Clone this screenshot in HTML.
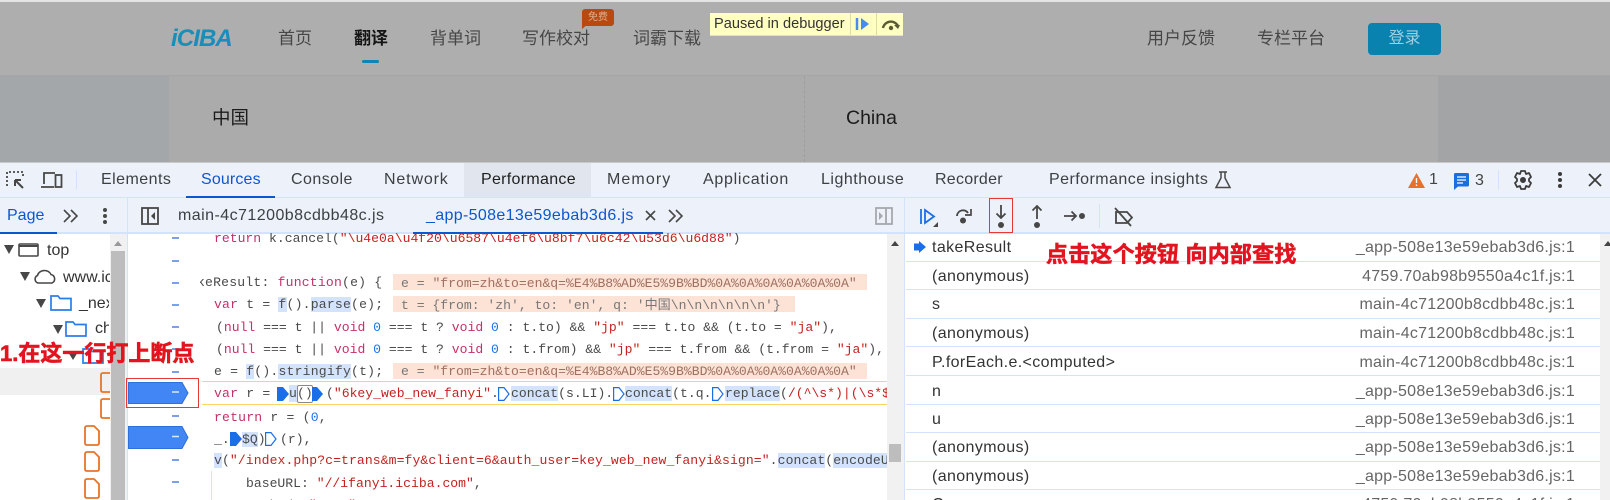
<!DOCTYPE html>
<html><head><meta charset="utf-8"><style>
html,body{margin:0;padding:0;width:1610px;height:500px;overflow:hidden;background:#fff}
body{position:relative;font-family:"Liberation Sans","Noto Sans CJK SC",sans-serif}
.a{position:absolute;white-space:pre}
.nav{top:27px;line-height:24px;font-size:17px;color:#464646}
.tab{top:168px;line-height:24px;font-size:16px;letter-spacing:.45px;color:#3c4043}
.c{position:absolute;left:0;top:0;width:887px;height:500px;clip-path:inset(233px 0 0 200px);font-family:"Liberation Mono",monospace;font-size:13.1px;color:#4a4a4a}
.l{position:absolute;white-space:pre;height:22px;line-height:22px}
.k{color:#c5306a}.s{color:#c5221f}.n{color:#1a73e8}.g{color:#777}
.h{background:#d3e3fd}
.o{position:absolute;background:#fde2d6}
.gm{position:absolute;left:172px;width:7px;height:1.5px;background:#7b9fe8}
.row{position:absolute;left:906px;width:694px;height:28px;border-bottom:1.5px solid #d3e3fd}
.nm{position:absolute;left:932px;font-size:16px;letter-spacing:.38px;color:#333;line-height:22px;white-space:pre}
.sr{position:absolute;right:35px;font-size:16px;color:#666;line-height:22px;white-space:pre;letter-spacing:.25px}
.tree{position:absolute;font-size:16px;color:#333;line-height:22px;white-space:pre}
.red{position:absolute;color:#e2141f;font-weight:700;white-space:pre;-webkit-text-stroke:.6px #e2141f}
svg{position:absolute;overflow:visible}
</style></head><body>

<!-- page behind -->
<div class="a" style="left:0;top:0;width:1610px;height:162px;background:#ababab"></div>
<div class="a" style="left:0;top:0;width:1610px;height:2px;background:#e4e4e4"></div>
<div class="a" style="left:0;top:2px;width:1610px;height:73px;background:#aeaeae;border-bottom:1px solid #a6a6a6"></div>
<div class="a" style="left:0;top:76px;width:169px;height:86px;background:#a4a7aa"></div>
<div class="a" style="left:1438px;top:76px;width:172px;height:86px;background:#a3a4a6"></div>
<div class="a" style="left:804px;top:76px;height:86px;border-left:1px dashed #9e9e9e"></div>

<div class="a" style="left:171px;top:24px;font-size:24px;line-height:30px;font-weight:700;font-style:italic;color:#1a8db8;letter-spacing:-.9px">iCIBA</div>
<div class="a nav" style="left:278px">首页</div>
<div class="a nav" style="left:354px;color:#151515;font-weight:700">翻译</div>
<div class="a" style="left:362px;top:60px;width:17px;height:3px;border-radius:2px;background:#0d86b3"></div>
<div class="a nav" style="left:430px">背单词</div>
<div class="a nav" style="left:522px">写作校对</div>
<div class="a nav" style="left:633px">词霸下载</div>
<div class="a" style="left:582px;top:9px;width:32px;height:17px;border-radius:3px;background:#b8490f;color:#e0b090;font-size:10px;line-height:17px;text-align:center">免费</div>
<svg style="left:582px;top:24px" width="6" height="5"><path d="M0 0H6L0 5Z" fill="#b8490f"/></svg>
<div class="a nav" style="left:1147px">用户反馈</div>
<div class="a nav" style="left:1257px">专栏平台</div>
<div class="a" style="left:1368px;top:23px;width:73px;height:32px;border-radius:4px;background:#0a82b0;color:#9fd0e2;font-size:16px;line-height:32px;text-align:center">登录</div>
<div class="a" style="left:212px;top:104px;font-size:18.5px;line-height:28px;color:#1c1c1c">中国</div>
<div class="a" style="left:846px;top:104px;font-size:19.5px;line-height:28px;color:#1c1c1c">China</div>

<!-- paused box -->
<div class="a" style="left:710px;top:13px;width:193px;height:22px;background:#ffffc2;border-bottom:1px solid #e4e4b0"></div>
<div class="a" style="left:714px;top:13px;font-size:14.6px;line-height:22px;color:#333">Paused in debugger</div>
<div class="a" style="left:850px;top:13px;width:1px;height:22px;background:#dcdca8"></div>
<div class="a" style="left:876px;top:13px;width:1px;height:22px;background:#dcdca8"></div>
<svg style="left:856px;top:17px" width="14" height="14"><path d="M1 1V13" stroke="#4a8af0" stroke-width="2.5"/><path d="M5 1L13 7L5 13Z" fill="#4a8af0"/></svg>
<svg style="left:881px;top:17px" width="20" height="14"><path d="M2 11A8 8 0 0 1 17 9" fill="none" stroke="#5b5b33" stroke-width="2.4"/><path d="M13 8H19L17 12Z" fill="#5b5b33"/><circle cx="10" cy="11" r="2.2" fill="#5b5b33"/></svg>

<!-- devtools -->
<div class="a" style="left:0;top:162px;width:1610px;height:71px;background:#edf2fa;border-top:1px solid #c9c9c9;box-sizing:border-box"></div>
<div class="a" style="left:0;top:197px;width:1610px;height:1px;background:#d3e3fd"></div>
<div class="a" style="left:0;top:232px;width:1610px;height:1.5px;background:#d3e3fd"></div>

<svg style="left:6px;top:170px" width="20" height="20" fill="none" stroke="#474747"><path d="M1 16V2H17V8" stroke-dasharray="2 2" stroke-width="1.8"/><path d="M9 10L17 18M9 10V16M9 10H15" stroke-width="2"/></svg>
<svg style="left:41px;top:171px" width="22" height="18" fill="none" stroke="#474747" stroke-width="1.8"><path d="M3 13V2H14M0 16H13"/><rect x="14.5" y="4" width="6" height="12"/></svg>
<div class="a" style="left:76px;top:170px;width:1px;height:20px;background:#d3e3fd"></div>
<div class="a" style="left:464px;top:163px;width:127px;height:34px;background:#e1e6ee"></div>
<div class="a tab" style="left:101px">Elements</div>
<div class="a tab" style="left:201px;color:#0b57d0;letter-spacing:.15px">Sources</div>
<div class="a" style="left:186px;top:196px;width:89px;height:2px;background:#0b57d0"></div>
<div class="a tab" style="left:291px">Console</div>
<div class="a tab" style="left:384px;letter-spacing:.85px">Network</div>
<div class="a tab" style="left:481px;color:#1f1f1f;letter-spacing:.3px">Performance</div>
<div class="a tab" style="left:607px;letter-spacing:1.1px">Memory</div>
<div class="a tab" style="left:703px;letter-spacing:.7px">Application</div>
<div class="a tab" style="left:821px;letter-spacing:.5px">Lighthouse</div>
<div class="a tab" style="left:935px;letter-spacing:.25px">Recorder</div>
<div class="a tab" style="left:1049px">Performance insights</div>
<svg style="left:1215px;top:171px" width="16" height="18" fill="none" stroke="#474747" stroke-width="1.5"><path d="M4 1H12M6 1V7L1 16.500H15L10 7V1"/></svg>

<svg style="left:1408px;top:173px" width="17" height="15"><path d="M8.500 0L17 15H0Z" fill="#e8702a"/><path d="M8.500 5V10M8.500 11.500V13" stroke="#fff" stroke-width="1.4"/></svg>
<div class="a" style="left:1429px;top:168px;font-size:16px;line-height:24px;color:#444">1</div>
<svg style="left:1454px;top:173px" width="15" height="17"><path d="M0 1.500Q0 0 1.500 0H13.500Q15 0 15 1.500V12Q15 13.500 13.500 13.500H4L0 17Z" fill="#1a6fe0"/><path d="M3 4H12M3 7H12M3 10H9" stroke="#fff" stroke-width="1.300"/></svg>
<div class="a" style="left:1475px;top:169px;font-size:16px;line-height:24px;color:#444">3</div>
<div class="a" style="left:1498px;top:170px;width:1px;height:20px;background:#d3e3fd"></div>
<svg style="left:1513px;top:170px" width="20" height="20" fill="none" stroke="#3c3c3c"><path d="M8 1H12L13 4L16 3L18 7L16 9V11L18 13L16 17L13 16L12 19H8L7 16L4 17L2 13L4 11V9L2 7L4 3L7 4Z" stroke-width="1.800" stroke-linejoin="round"/><circle cx="10" cy="10" r="3" fill="#3c3c3c" stroke="none"/></svg>
<svg style="left:1556px;top:171px" width="8" height="18" fill="#3c3c3c"><circle cx="4" cy="3" r="2"/><circle cx="4" cy="9" r="2"/><circle cx="4" cy="15" r="2"/></svg>
<svg style="left:1588px;top:173px" width="14" height="14" stroke="#3c3c3c" stroke-width="1.800"><path d="M1 1L13 13M13 1L1 13"/></svg>

<!-- 2nd toolbar -->
<div class="a" style="left:7px;top:204px;font-size:16px;line-height:24px;color:#0b57d0">Page</div>
<div class="a" style="left:0;top:232px;width:57px;height:2px;background:#0b57d0"></div>
<svg style="left:63px;top:209px" width="16" height="14" fill="none" stroke="#474747" stroke-width="1.600"><path d="M1 1L7 7L1 13M8 1L14 7L8 13"/></svg>
<svg style="left:101px;top:207px" width="8" height="18" fill="#474747"><circle cx="4" cy="3" r="2"/><circle cx="4" cy="9" r="2"/><circle cx="4" cy="15" r="2"/></svg>
<div class="a" style="left:127px;top:198px;width:1px;height:302px;background:#d3e3fd"></div>
<svg style="left:141px;top:207px" width="18" height="18" fill="none" stroke="#474747" stroke-width="1.800"><rect x="1" y="1" width="16" height="16"/><path d="M7 1V17"/><path d="M14 5V13L10 9Z" fill="#474747" stroke="none"/></svg>
<div class="a" style="left:178px;top:204px;font-size:16px;letter-spacing:.45px;line-height:24px;color:#3c4043">main-4c71200b8cdbb48c.js</div>
<div class="a" style="left:426px;top:204px;font-size:16px;letter-spacing:.35px;line-height:24px;color:#0b57d0">_app-508e13e59ebab3d6.js</div>
<svg style="left:645px;top:210px" width="11" height="11" stroke="#474747" stroke-width="1.600"><path d="M1 1L10 10M10 1L1 10"/></svg>
<svg style="left:668px;top:209px" width="16" height="14" fill="none" stroke="#474747" stroke-width="1.600"><path d="M1 1L7 7L1 13M8 1L14 7L8 13"/></svg>
<div class="a" style="left:413px;top:232px;width:250px;height:2px;background:#0b57d0"></div>
<svg style="left:875px;top:207px" width="18" height="18" fill="none" stroke="#a5a8ad" stroke-width="1.800"><rect x="1" y="1" width="16" height="16"/><path d="M11 1V17"/><path d="M4 5V13L8 9Z" fill="#a5a8ad" stroke="none"/></svg>
<div class="a" style="left:904px;top:198px;width:1px;height:302px;background:#d3e3fd"></div>

<!-- toolbar debug icons -->
<svg style="left:920px;top:208px" width="20" height="20"><path d="M1 1V16" stroke="#1a6fe8" stroke-width="1.800"/><path d="M5 2L14 8.500L5 15Z" fill="none" stroke="#1a6fe8" stroke-width="1.800"/><path d="M18 14V19H13Z" fill="#474747"/></svg>
<svg style="left:955px;top:207px" width="18" height="20" fill="none" stroke="#474747" stroke-width="1.900"><path d="M2 9A6 6 0 0 1 13 6"/><path d="M16 2V8H10" stroke-width="1.700"/><circle cx="8" cy="13.500" r="3" fill="#474747" stroke="none"/></svg>
<svg style="left:995px;top:204px" width="12" height="26" fill="none" stroke="#474747" stroke-width="1.800"><path d="M6 1V14M1.500 9.500L6 14L10.500 9.500"/><circle cx="6" cy="21" r="3" fill="#474747" stroke="none"/></svg>
<svg style="left:1031px;top:204px" width="12" height="26" fill="none" stroke="#474747" stroke-width="1.800"><path d="M6 15V2M1.500 6.500L6 2L10.500 6.500"/><circle cx="6" cy="21" r="3" fill="#474747" stroke="none"/></svg>
<svg style="left:1064px;top:208px" width="22" height="16" fill="none" stroke="#474747" stroke-width="1.800"><path d="M0 8H12M7.500 3.500L12 8L7.500 12.500"/><circle cx="18" cy="8" r="3" fill="#474747" stroke="none"/></svg>
<div class="a" style="left:1099px;top:204px;width:1px;height:24px;background:#d3e3fd"></div>
<svg style="left:1113px;top:207px" width="21" height="20" fill="none" stroke="#474747" stroke-width="1.800"><path d="M3 5H14L19 10.500L14 16H3Z"/><path d="M2 1L18 19"/></svg>
<div class="a" style="left:989px;top:198px;width:22px;height:33px;border:1px solid #e53935"></div>

<!-- left tree -->
<div class="a" style="left:0;top:234px;width:127px;height:266px;background:#fff"></div>
<div class="a" style="left:0;top:368px;width:110px;height:27px;background:#f0f0f0"></div>
<svg style="left:4px;top:245px" width="10" height="9"><path d="M0 0H10L5 9Z" fill="#474747"/></svg>
<svg style="left:18px;top:243px" width="21" height="14" fill="none" stroke="#474747" stroke-width="1.600"><rect x="1" y="1" width="19" height="12" rx="1"/><path d="M1 3H20" stroke-width="2"/></svg>
<div class="tree" style="left:47px;top:240px">top</div>
<svg style="left:20px;top:272px" width="10" height="9"><path d="M0 0H10L5 9Z" fill="#474747"/></svg>
<svg style="left:33px;top:269px" width="24" height="15" fill="none" stroke="#474747" stroke-width="1.600"><path d="M5 14A4 4 0 0 1 4.500 6.500A7 6 0 0 1 18 5.500A4.500 4.500 0 0 1 19 14Z"/></svg>
<div class="a" style="left:0;top:262px;width:110px;height:30px;overflow:hidden"><div class="tree" style="left:63px;top:5px">www.iciba.com</div></div>
<svg style="left:36px;top:299px" width="10" height="9"><path d="M0 0H10L5 9Z" fill="#474747"/></svg>
<svg style="left:50px;top:295px" width="22" height="16" fill="none" stroke="#2a7de8" stroke-width="1.700"><path d="M1 1H8L10 3.500H21V15H1Z"/></svg>
<div class="a" style="left:0;top:292px;width:109px;height:26px;overflow:hidden"><div class="tree" style="left:79px;top:1px">_next</div></div>
<svg style="left:53px;top:325px" width="10" height="9"><path d="M0 0H10L5 9Z" fill="#474747"/></svg>
<svg style="left:65px;top:321px" width="22" height="16" fill="none" stroke="#2a7de8" stroke-width="1.700"><path d="M1 1H8L10 3.500H21V15H1Z"/></svg>
<div class="a" style="left:0;top:318px;width:109px;height:24px;overflow:hidden"><div class="tree" style="left:95px;top:0">chunks</div></div>
<svg style="left:68px;top:352px" width="10" height="8"><path d="M0 0H10L5 8Z" fill="#474747"/></svg>
<svg style="left:82px;top:348px" width="20" height="16" fill="none" stroke="#2a7de8" stroke-width="1.700"><path d="M1 1H8L10 3.500H21V15H1Z"/></svg>

<svg style="left:100px;top:372px" width="10" height="21" fill="none" stroke="#e8742a" stroke-width="1.800"><path d="M10 1H3Q1 1 1 3V18Q1 20 3 20H10"/></svg>
<svg style="left:100px;top:398px" width="10" height="21" fill="none" stroke="#e8742a" stroke-width="1.800"><path d="M10 1H3Q1 1 1 3V18Q1 20 3 20H10"/></svg>
<svg style="left:84px;top:425px" width="16" height="21" fill="none" stroke="#e8742a" stroke-width="1.800"><path d="M10 1H3Q1 1 1 3V18Q1 20 3 20H13Q15 20 15 18V6Z"/></svg>
<svg style="left:84px;top:451px" width="16" height="21" fill="none" stroke="#e8742a" stroke-width="1.800"><path d="M10 1H3Q1 1 1 3V18Q1 20 3 20H13Q15 20 15 18V6Z"/></svg>
<svg style="left:84px;top:478px" width="16" height="21" fill="none" stroke="#e8742a" stroke-width="1.800"><path d="M10 1H3Q1 1 1 3V18Q1 20 3 20H13Q15 20 15 18V6Z"/></svg>

<div class="a" style="left:110px;top:234px;width:17px;height:266px;background:#f1f1f1"></div>
<div class="a" style="left:111px;top:251px;width:14px;height:249px;background:#bdbdbd"></div>
<svg style="left:114px;top:241px" width="8" height="5"><path d="M4 0L8 5H0Z" fill="#999"/></svg>

<!-- gutter -->
<div class="a" style="left:128px;top:234px;width:75px;height:266px;background:#fff"></div>
<div class="gm" style="top:237px"></div><div class="gm" style="top:260px"></div><div class="gm" style="top:282px"></div><div class="gm" style="top:304px"></div><div class="gm" style="top:326px"></div><div class="gm" style="top:348px"></div><div class="gm" style="top:371px"></div><div class="gm" style="top:415px"></div><div class="gm" style="top:459px"></div><div class="gm" style="top:481px"></div>
<svg style="left:128px;top:382px" width="61" height="22"><path d="M0.500 0.500H54L60 11L54 21.500H0.500Z" fill="#4285f4" stroke="#2f6fdc"/><path d="M44 10H51" stroke="#dbe7fd" stroke-width="1.500"/></svg>
<svg style="left:128px;top:426px" width="61" height="23"><path d="M0.500 0.500H54L60 11.500L54 22.500H0.500Z" fill="#4285f4" stroke="#2f6fdc"/><path d="M44 10.500H51" stroke="#dbe7fd" stroke-width="1.500"/></svg>
<div class="a" style="left:126px;top:378px;width:71px;height:28px;border:1px solid #e53935"></div>

<!-- code -->
<div class="a" style="left:203px;top:234px;width:684px;height:266px;background:#fff"></div>
<div class="a" style="left:202px;top:381px;width:685px;height:24px;border-top:1.500px solid #fbd464;border-bottom:1.500px solid #fbd464;box-sizing:border-box"></div>
<div class="a" style="left:211px;top:471px;width:1px;height:29px;background:#d3e3fd"></div>
<div class="c">
<div class="o" style="left:393px;top:274px;width:474px;height:16px"></div>
<div class="o" style="left:393px;top:296px;width:402px;height:16px"></div>
<div class="o" style="left:393px;top:363px;width:474px;height:16px"></div>

<div class="l" style="left:214px;top:228px"><span class="k">return</span> k.cancel(<span class="s">"\u4e0a\u4f20\u6587\u4ef6\u8bf7\u6c42\u53d6\u6d88"</span>)</div>

<div class="l" style="left:197px;top:272px;letter-spacing:.2px">keResult: <span class="k">function</span>(e) {</div>
<div class="l g" style="left:401px;top:273px">e = <span style="color:#a0705f">"from=zh&amp;to=en&amp;q=%E4%B8%AD%E5%9B%BD%0A%0A%0A%0A%0A%0A"</span></div>

<div class="l" style="left:214px;top:294px;letter-spacing:.2px"><span class="k">var</span> t = <span class="h">f</span>().<span class="h">parse</span>(e);</div>
<div class="l g" style="left:401px;top:295px">t = {from: 'zh', to: 'en', q: '中国\n\n\n\n\n\n'}</div>

<div class="l" style="left:216px;top:317px"><span>(</span><span class="k">null</span> === t || <span class="k">void</span> <span class="n">0</span> === t ? <span class="k">void</span> <span class="n">0</span> : t.to) &amp;&amp; <span class="s">"jp"</span> === t.to &amp;&amp; (t.to = <span class="s">"ja"</span>),</div>
<div class="l" style="left:216px;top:339px">(<span class="k">null</span> === t || <span class="k">void</span> <span class="n">0</span> === t ? <span class="k">void</span> <span class="n">0</span> : t.from) &amp;&amp; <span class="s">"jp"</span> === t.from &amp;&amp; (t.from = <span class="s">"ja"</span>),</div>

<div class="l" style="left:214px;top:361px;letter-spacing:.2px">e = <span class="h">f</span>().<span class="h">stringify</span>(t);</div>
<div class="l g" style="left:401px;top:361px">e = <span style="color:#a0705f">"from=zh&amp;to=en&amp;q=%E4%B8%AD%E5%9B%BD%0A%0A%0A%0A%0A%0A"</span></div>

<div class="l" style="left:214px;top:383px;letter-spacing:.2px"><span class="k">var</span> r =</div>
<svg style="left:277px;top:387px" width="12" height="14"><path d="M0 0H6L12 7L6 14H0Z" fill="#1a6fe8"/></svg>
<div class="l h" style="left:289px;top:385px;height:17px;line-height:18px;">u</div>
<div class="a" style="left:297px;top:385px;width:14px;height:16px;border:1px solid #888;border-radius:2px"></div>
<div class="l" style="left:297px;top:383px">()</div>
<svg style="left:312px;top:387px" width="11" height="14"><path d="M0 0H5L11 7L5 14H0Z" fill="#1a6fe8"/></svg>
<div class="l" style="left:326px;top:383px">(<span class="s">"6key_web_new_fanyi"</span>.</div>
<svg style="left:498px;top:387px" width="12" height="14" fill="none" stroke="#1a6fe8" stroke-width="1.200"><path d="M.6 .6H6L11 7L6 13.400H.6Z"/></svg>
<div class="l" style="left:511px;top:383px"><span class="h">concat</span>(s.LI).</div>
<svg style="left:613px;top:387px" width="12" height="14" fill="none" stroke="#1a6fe8" stroke-width="1.200"><path d="M.6 .6H6L11 7L6 13.400H.6Z"/></svg>
<div class="l" style="left:625px;top:383px"><span class="h">concat</span>(t.q.</div>
<svg style="left:712px;top:387px" width="12" height="14" fill="none" stroke="#1a6fe8" stroke-width="1.200"><path d="M.6 .6H6L11 7L6 13.400H.6Z"/></svg>
<div class="l" style="left:725px;top:383px"><span class="h">replace</span>(<span class="s">/(^\s*)|(\s*$)/g</span></div>

<div class="l" style="left:214px;top:407px;letter-spacing:.2px"><span class="k">return</span> r = (<span class="n">0</span>,</div>
<div class="l" style="left:214px;top:429px">_.</div>
<svg style="left:230px;top:432px" width="12" height="14"><path d="M0 0H6L12 7L6 14H0Z" fill="#1a6fe8"/></svg>
<div class="l" style="left:242px;top:429px"><span class="h">$Q</span>)</div>
<svg style="left:265px;top:432px" width="12" height="14" fill="none" stroke="#1a6fe8" stroke-width="1.200"><path d="M.6 .6H6L11 7L6 13.400H.6Z"/></svg>
<div class="l" style="left:280px;top:429px">(r),</div>
<div class="l" style="left:214px;top:450px;letter-spacing:.08px"><span class="h">v</span>(<span class="s">"/index.php?c=trans&amp;m=fy&amp;client=6&amp;auth_user=key_web_new_fanyi&amp;sign="</span>.<span class="h">concat</span>(<span class="h">encodeURIComponent</span></div>
<div class="l" style="left:246px;top:473px">baseURL: <span class="s">"//ifanyi.iciba.com"</span>,</div>
<div class="l" style="left:246px;top:495px">method: <span class="s">"post"</span>,</div>
</div>

<!-- code scrollbar -->
<div class="a" style="left:887px;top:234px;width:17px;height:266px;background:#f1f1f1"></div>
<svg style="left:891px;top:241px" width="8" height="5"><path d="M4 0L8 5H0Z" fill="#444"/></svg>
<div class="a" style="left:889px;top:444px;width:12px;height:18px;background:#bdbdbd"></div>

<!-- call stack -->
<div class="a" style="left:905px;top:234px;width:705px;height:266px;background:#fff"></div>
<div class="row" style="top:233px"></div>
<div class="row" style="top:261px"></div>
<div class="row" style="top:290px"></div>
<div class="row" style="top:318px"></div>
<div class="row" style="top:347px"></div>
<div class="row" style="top:376px"></div>
<div class="row" style="top:404px"></div>
<div class="row" style="top:433px"></div>
<div class="row" style="top:461px"></div>
<svg style="left:914px;top:241px" width="12" height="12"><path d="M0 2.500H5V0L12 6L5 12V9.500H0Z" fill="#1a6fe8"/></svg>
<div class="nm" style="top:237px">takeResult</div><div class="sr" style="top:237px">_app-508e13e59ebab3d6.js:1</div>
<div class="nm" style="top:266px">(anonymous)</div><div class="sr" style="top:266px">4759.70ab98b9550a4c1f.js:1</div>
<div class="nm" style="top:294px">s</div><div class="sr" style="top:294px">main-4c71200b8cdbb48c.js:1</div>
<div class="nm" style="top:323px">(anonymous)</div><div class="sr" style="top:323px">main-4c71200b8cdbb48c.js:1</div>
<div class="nm" style="top:352px">P.forEach.e.&lt;computed&gt;</div><div class="sr" style="top:352px">main-4c71200b8cdbb48c.js:1</div>
<div class="nm" style="top:381px">n</div><div class="sr" style="top:381px">_app-508e13e59ebab3d6.js:1</div>
<div class="nm" style="top:409px">u</div><div class="sr" style="top:409px">_app-508e13e59ebab3d6.js:1</div>
<div class="nm" style="top:437px">(anonymous)</div><div class="sr" style="top:437px">_app-508e13e59ebab3d6.js:1</div>
<div class="nm" style="top:466px">(anonymous)</div><div class="sr" style="top:466px">_app-508e13e59ebab3d6.js:1</div>
<div class="nm" style="top:494px">C</div><div class="sr" style="top:494px">4759.70ab98b9550a4c1f.js:1</div>
<div class="a" style="left:1600px;top:234px;width:10px;height:266px;background:#f1f1f1"></div>
<svg style="left:1604px;top:241px" width="8" height="5"><path d="M4 0L8 5H0Z" fill="#444"/></svg>

<!-- annotations -->
<div class="red" style="left:0;top:339px;font-size:22px;line-height:30px">1.在这一行打上断点</div>
<div class="red" style="left:1046px;top:240px;font-size:22px;line-height:30px;letter-spacing:.2px">点击这个按钮 向内部查找</div>
</body></html>
